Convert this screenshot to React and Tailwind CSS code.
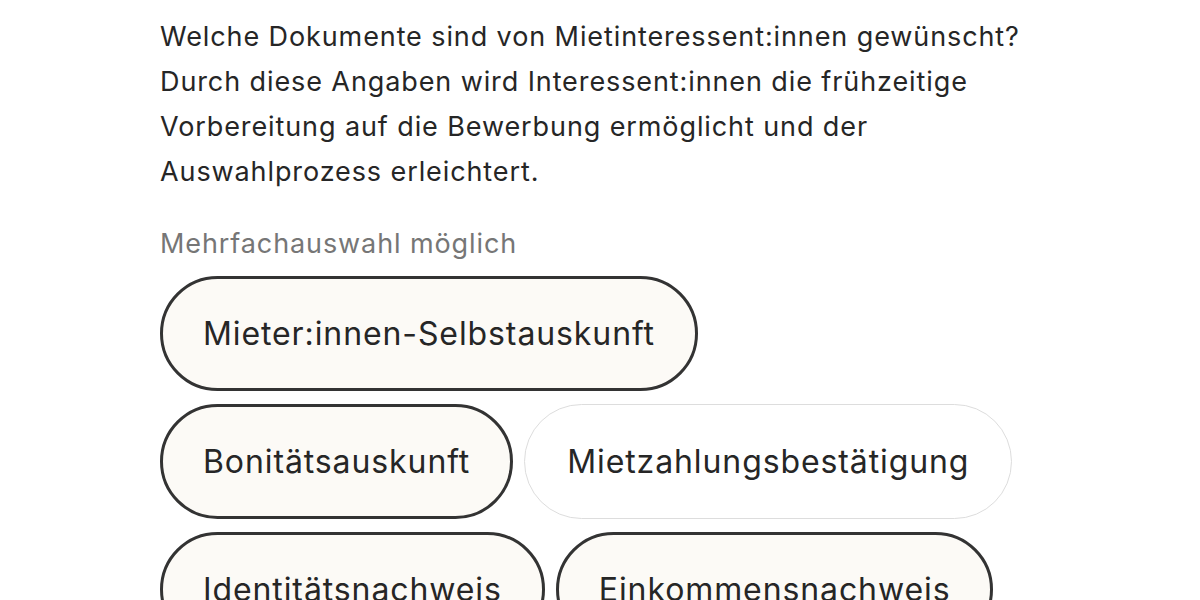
export default function App() {
  const chips = [
    [{ t: "Mieter:innen-Selbstauskunft", s: true }],
    [{ t: "Bonitätsauskunft", s: true }, { t: "Mietzahlungsbestätigung", s: false }],
    [{ t: "Identitätsnachweis", s: true }, { t: "Einkommensnachweis", s: true }],
  ];
  return (
    <div className="w-[1200px] h-[600px] overflow-hidden bg-white text-[#262626]" style={{ fontFamily: "Inter, 'Noto Sans', sans-serif" }}>
      <div className="pl-[160px] pt-[14px]">
        <p className="w-[870px] text-[27px] leading-[45px] tracking-[0.9px]">
          Welche Dokumente sind von Mietinteressent:innen gewünscht? Durch diese Angaben wird Interessent:innen die frühzeitige Vorbereitung auf die Bewerbung ermöglicht und der Auswahlprozess erleichtert.
        </p>
        <p className="mt-[27px] text-[27px] leading-[45px] tracking-[0.9px] text-[#767676]">Mehrfachauswahl möglich</p>
        <div className="mt-[10px] flex flex-col gap-[13px]">
          {chips.map((row, i) => (
            <div key={i} className="flex gap-[11px]">
              {row.map((c) => (
                <div
                  key={c.t}
                  className={
                    c.s
                      ? "h-[115px] px-[40px] flex items-center rounded-full border-[3px] border-[#333333] bg-[#fcfaf6] text-[32px] tracking-[0.9px]"
                      : "h-[115px] px-[42px] flex items-center rounded-full border-[1.5px] border-[#dddddd] bg-white text-[32px] tracking-[0.9px]"
                  }
                >
                  {c.t}
                </div>
              ))}
            </div>
          ))}
        </div>
      </div>
    </div>
  );
}
